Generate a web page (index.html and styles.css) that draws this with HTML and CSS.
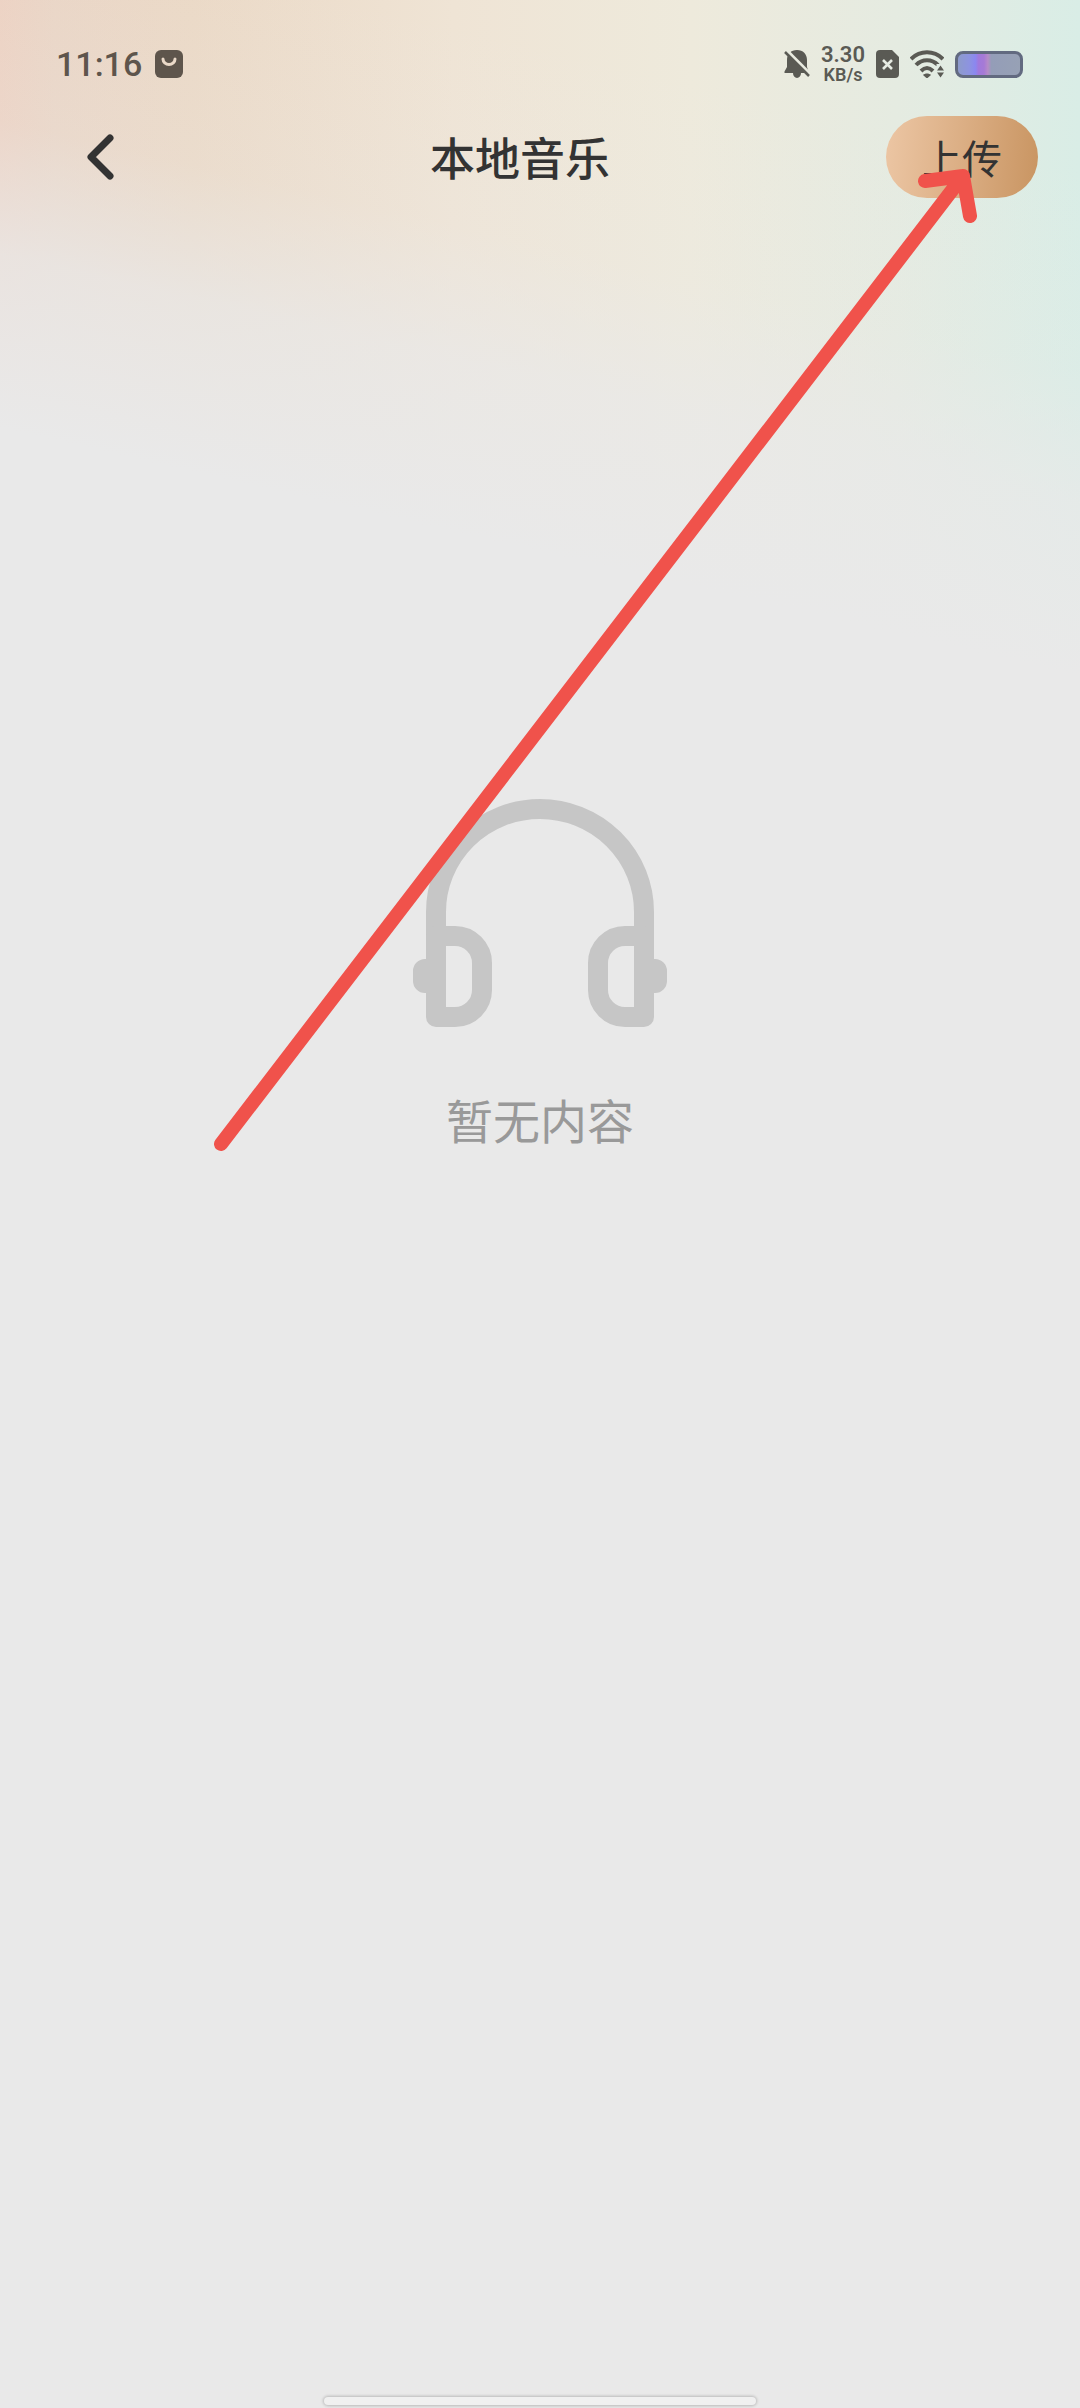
FILE: index.html
```html
<!DOCTYPE html>
<html lang="zh-CN">
<head>
    <meta charset="UTF-8">
    <meta name="viewport" content="width=device-width, initial-scale=1.0">
    <title>本地音乐</title>
    <link rel="stylesheet" href="styles.css">
</head>
<body>
    <div class="status-bar">
        <div class="status-left">
            <span class="time">11:16</span>
            <svg class="app-icon" viewBox="0 0 28 28" width="28" height="28" aria-hidden="true">
                <rect width="28" height="28" rx="6" fill="#5e554c"/>
                <path d="M8 9a6 5.500 0 0 0 12 0" fill="none" stroke="#ead9c8" stroke-width="3" stroke-linecap="round"/>
            </svg>
        </div>
        <div class="status-right">
            <svg viewBox="0 0 26 28" width="26" height="28" aria-hidden="true">
                <path d="M13 0C7 0 3 4 3 10v7l-2.500 4.500V23H9a4 5 0 0 0 8 0h7.500v-1.500L23 17v-7C23 4 19 0 13 0z" fill="#5a5a54"/>
                <path d="M2.500 0l25 25" stroke="#e9ebe0" stroke-width="3"/>
                <path d="M1 2l24 24" stroke="#5a5a54" stroke-width="2.500"/>
            </svg>
            <div class="speed">
                <span class="speed-value">3.30</span>
                <span class="speed-unit">KB/s</span>
            </div>
            <svg viewBox="0 0 23 28" width="23" height="28" aria-hidden="true">
                <path d="M4 0h12l7 7v17a4 4 0 0 1-4 4H4a4 4 0 0 1-4-4V4a4 4 0 0 1 4-4z" fill="#5a5a54"/>
                <path d="M7 10l9 9M16 10l-9 9" stroke="#e6ebe2" stroke-width="2.600"/>
            </svg>
            <svg viewBox="0 0 34 28" width="34" height="28" aria-hidden="true">
                <g fill="none" stroke="#5a5a54" stroke-width="4">
                    <path d="M1 9C10 0 24 0 33 9"/>
                    <path d="M6 15c6-6.500 16-6.500 22 0"/>
                    <path d="M11 21c4-4 8-4 12 0"/>
                </g>
                <path d="M13 25c2-2 6-2 8 0l-4 3.500z" fill="#5a5a54"/>
                <path d="M26.500 14h8v14h-8z" fill="#e1ebe3"/>
                <path d="M30.500 15.500l3.500 5h-7zM30.500 27.500l3.500-5h-7z" fill="#5a5a54"/>
            </svg>
            <div class="battery"></div>
        </div>
    </div>

    <header class="header">
        <button type="button" class="back-btn" aria-label="返回">
            <svg viewBox="0 0 28 46" width="28" height="46" aria-hidden="true">
                <path d="M24 4L5 23l19 19" fill="none" stroke="#333" stroke-width="7" stroke-linecap="round" stroke-linejoin="round"/>
            </svg>
        </button>
        <h1>本地音乐</h1>
        <button type="button" class="upload-btn">上传</button>
    </header>

    <main class="empty">
        <svg viewBox="0 0 254 228" width="254" height="228" aria-hidden="true">
            <g fill="none" stroke="#c6c6c6" stroke-width="20">
                <path d="M23 218V113a104 103 0 0 1 208 0v105"/>
                <path d="M23 137h19a27 27 0 0 1 27 27v27a27 27 0 0 1-27 27H23z" stroke-linejoin="round"/>
                <path d="M231 137h-19a27 27 0 0 0-27 27v27a27 27 0 0 0 27 27h19z" stroke-linejoin="round"/>
            </g>
            <path d="M14 160h-2a12 12 0 0 0-12 12v10a12 12 0 0 0 12 12h2zM240 160h2a12 12 0 0 1 12 12v10a12 12 0 0 1-12 12h-2z" fill="#c6c6c6"/>
        </svg>
        <p>暂无内容</p>
    </main>

    <div class="home-bar"></div>

    <!-- arrow pointing at the upload button -->
    <svg class="arrow" viewBox="0 0 764 984" width="764" height="984" aria-hidden="true">
        <path d="M8 976L750 8M712 13l38-5 7 40" fill="none" stroke="#f0524b" stroke-width="14" stroke-linecap="round" stroke-linejoin="round"/>
    </svg>
</body>
</html>
```

FILE: styles.css
```css
* {
    box-sizing: border-box;
}

body {
    position: relative;
    display: flex;
    flex-direction: column;
    min-height: 100vh;
    margin: 0;
    font-family: "Noto Sans CJK SC", sans-serif;
    color: #333;
    background:
        linear-gradient(193deg, rgba(233, 233, 233, 0) 160px, rgba(233, 233, 233, 0.2) 360px, rgba(233, 233, 233, 0.75) 490px, #e9e9e9 660px),
        linear-gradient(90deg, #edd1c1 0, #ead5c5 5%, #ebd9c6 18%, #efe4d5 42%, #eeeadc 64%, #e5ebe1 83%, #d9ede6 100%);
}

.status-bar {
    display: flex;
    justify-content: space-between;
    align-items: center;
    height: 104px;
    padding: 24px 57px 0 56px;
}

.status-left {
    display: flex;
    align-items: center;
    gap: 13px;
}

.time {
    font-family: Roboto, sans-serif;
    font-size: 34px;
    font-weight: 500;
    line-height: 40px;
    color: #5e554c;
}

.status-right {
    display: flex;
    align-items: center;
    gap: 11px;
}

.speed {
    display: flex;
    flex-direction: column;
    align-items: center;
    font-family: Roboto, sans-serif;
    font-weight: 600;
    color: #5a5a54;
}

.speed-value {
    font-size: 22px;
    line-height: 22px;
}

.speed-unit {
    font-size: 18px;
    line-height: 18px;
}

.battery {
    width: 68px;
    height: 27px;
    border: 3px solid #626a80;
    border-radius: 8px;
    background: linear-gradient(90deg, #8d9bcb 0, #8d93e0 18%, #8b87f0 28%, #a079dc 33%, #a67ad6 42%, #b58bc8 48%, #949db8 54%, #97a1b5 100%);
}

.header {
    display: flex;
    justify-content: space-between;
    align-items: center;
    padding: 12px 42px;
}

.header h1 {
    margin: 0;
    font-size: 45px;
    font-weight: 500;
    line-height: 64px;
}

button {
    padding: 0;
    border: none;
    background: none;
    font-family: inherit;
    color: inherit;
    cursor: pointer;
}

.back-btn {
    display: flex;
    align-items: center;
    width: 112px;
    height: 82px;
    padding-left: 44px;
}

.upload-btn {
    width: 152px;
    height: 82px;
    border-radius: 41px;
    background: linear-gradient(95deg, #ecc6a4 0%, #dbae84 50%, #c99562 100%);
    font-size: 40px;
}

.empty {
    display: flex;
    flex: 1;
    flex-direction: column;
    align-items: center;
    padding-top: 589px;
}

.empty p {
    margin: 60px 0 0;
    font-size: 47px;
    line-height: 64px;
    color: #999;
}

.home-bar {
    width: 40%;
    height: 8px;
    margin: 0 auto 3px;
    border-radius: 4px;
    background-color: #f0f0f0;
    box-shadow: 0 0 3px 1px rgba(0, 0, 0, 0.2);
}

.arrow {
    position: absolute;
    top: 168px;
    left: 213px;
}
```
